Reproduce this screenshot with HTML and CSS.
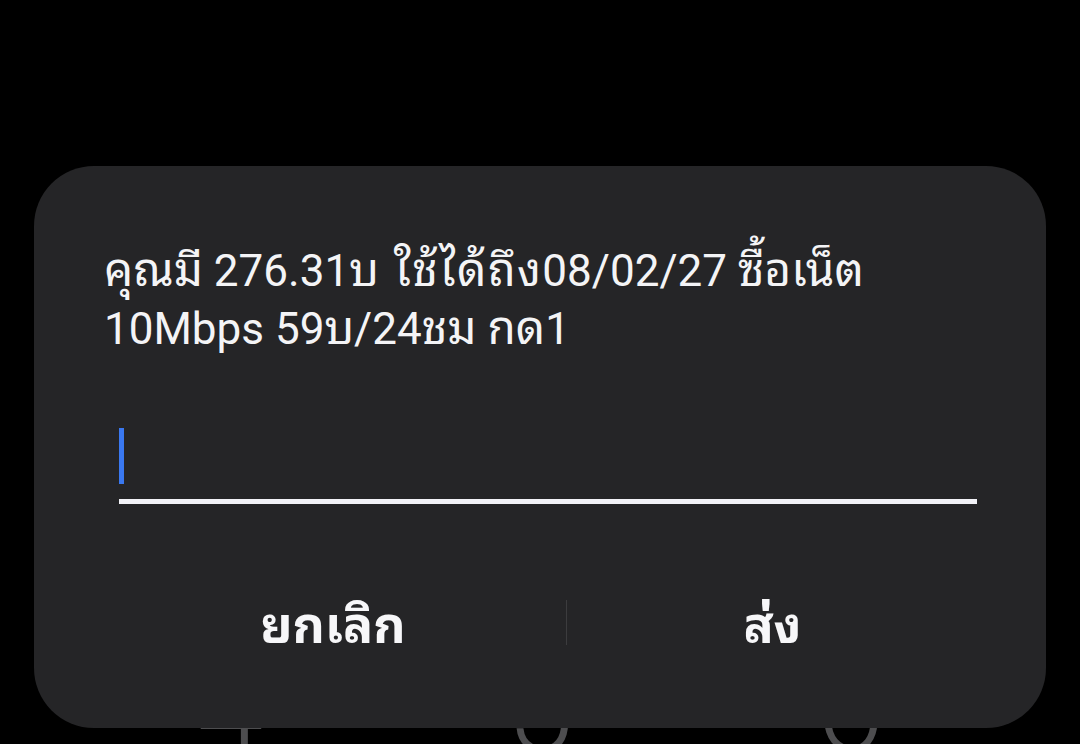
FILE: index.html
```html
<!DOCTYPE html>
<html lang="th">
<head>
<meta charset="utf-8">
<link rel="stylesheet" href="styles.css">
</head>
<body>
<div class="screen">
  <div class="keypad">
    <span class="key">4</span>
    <span class="key">5</span>
    <span class="key">6</span>
  </div>
  <div class="dialog">
    <p class="message"><span class="th">คุณมี</span> 276.31<span class="th">บ</span> <span class="th wide">ใช้ได้ถึง</span>08/02/27 <span class="th">ซื้อเน็ต</span> 10Mbps 59<span class="th">บ</span>/24<span class="th">ชม</span> <span class="th">กด</span>1</p>
    <div class="field"><span class="caret"></span></div>
    <div class="actions">
      <span class="btn">ยกเลิก</span>
      <span class="divider"></span>
      <span class="btn">ส่ง</span>
    </div>
  </div>
</div>
</body>
</html>
```

FILE: styles.css
```css
html, body {
  margin: 0;
  padding: 0;
  background: #000;
}
.screen {
  position: relative;
  width: 1080px;
  height: 744px;
  overflow: hidden;
  background: #000;
  font-family: Roboto, "Noto Sans Thai Looped", "Noto Sans Thai", sans-serif;
}
.keypad {
  display: grid;
  grid-template-columns: repeat(3, 1fr);
  padding: 650px 75px 0 75px;
}
.key {
  text-align: center;
  font-size: 120px;
  line-height: 120px;
  font-weight: 300;
  color: #4d4d4f;
}
.dialog {
  position: absolute;
  left: 34px;
  top: 166px;
  width: 1012px;
  height: 562px;
  box-sizing: border-box;
  background: #252527;
  border-radius: 60px;
  display: flex;
  flex-direction: column;
}
.message {
  margin: 0;
  padding: 76px 70px 0 70px;
  height: 116px;
  font-size: 44px;
  line-height: 58px;
  color: #f4f4f6;
}
.th {
  font-size: 46px;
  line-height: 30px;
}
.wide {
  padding-left: 4px;
  letter-spacing: 1.4px;
}
.field {
  margin: 70px 69px 0 85px;
  padding-bottom: 15px;
  border-bottom: 5px solid #f2f2f7;
  display: flex;
}
.caret {
  width: 5px;
  height: 56px;
  background: #3a78f0;
}
.actions {
  margin: 75.5px 68px 0 66px;
  height: 86px;
  display: grid;
  grid-template-columns: 466px 1px 1fr;
  align-items: center;
}
.btn {
  text-align: center;
  font-size: 50px;
  line-height: 80px;
  padding-top: 6px;
  font-weight: 700;
  color: #f7f7f9;
}
.divider {
  height: 45px;
  background: #3c3c3e;
}
```
